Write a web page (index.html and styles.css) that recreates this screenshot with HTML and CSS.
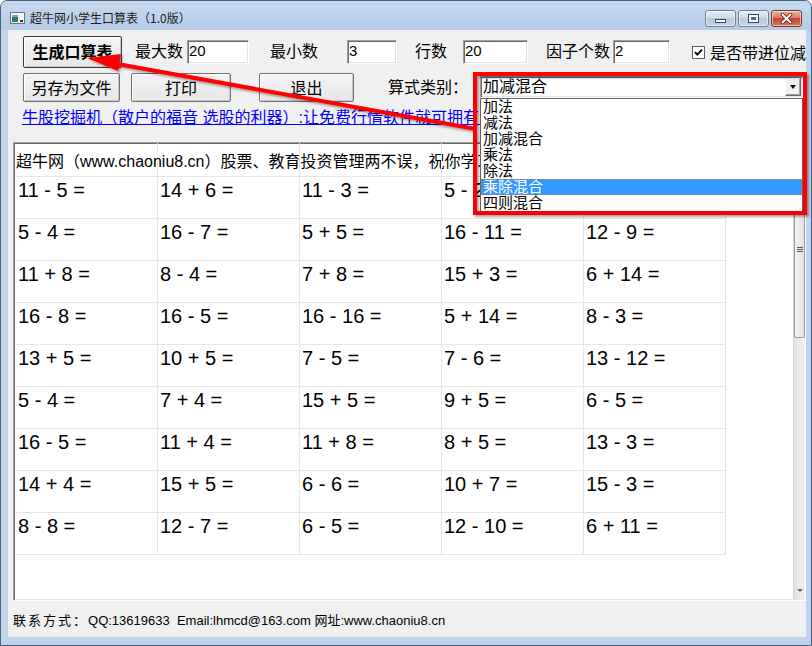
FILE: index.html
```html
<!doctype html>
<html lang="zh-CN">
<head>
    <meta charset="UTF-8">
    <meta name="viewport" content="width=device-width, initial-scale=1.0">
    <title>超牛网小学生口算表</title>
    <link rel="stylesheet" href="styles.css">
</head>
<body>
<div class="window">
    <div class="titlebar">
        <svg class="app-icon" width="16" height="16" viewBox="0 0 16 16">
            <rect x="0.5" y="2.5" width="14" height="11" fill="#f3f5f7" stroke="#6a7580"/>
            <rect x="2" y="5" width="6" height="7" fill="#2e7d68"/>
            <rect x="2" y="5" width="6" height="2" fill="#6fb39c"/>
            <rect x="10" y="10" width="3" height="2" fill="#333"/>
        </svg>
        <span class="title">超牛网小学生口算表（1.0版）</span>
        <div class="caption-buttons">
            <span class="cap cap-min"><i></i></span>
            <span class="cap cap-max"><i></i></span>
            <span class="cap cap-close">
                <svg width="13" height="11" viewBox="0 0 13 11">
                    <path d="M2.5 1.5 L10.5 9.5 M10.5 1.5 L2.5 9.5" stroke="#5a1a12" stroke-width="3.6" stroke-linecap="round"/>
                    <path d="M2.5 1.5 L10.5 9.5 M10.5 1.5 L2.5 9.5" stroke="#fff" stroke-width="2" stroke-linecap="round"/>
                </svg>
            </span>
        </div>
    </div>

    <div class="client">
        <div class="row row-top">
            <button class="btn btn-make">生成口算表</button>
            <span class="lbl lbl-max">最大数</span><input class="field f-max" type="text" value="20">
            <span class="lbl lbl-min">最小数</span><input class="field f-min" type="text" value="3">
            <span class="lbl lbl-rows">行数</span><input class="field f-rows" type="text" value="20">
            <span class="lbl lbl-factor">因子个数</span><input class="field f-factor" type="text" value="2">
            <label class="check">
                <span class="check-box">
                    <svg width="11" height="11" viewBox="0 0 11 11"><path d="M2 5.2 L4.3 7.6 L9 2.6" fill="none" stroke="#000" stroke-width="1.9"/></svg>
                </span>是否带进位减法
            </label>
        </div>

        <div class="row row-second">
            <button class="btn btn-save">另存为文件</button>
            <button class="btn btn-print">打印</button>
            <button class="btn btn-exit">退出</button>
            <span class="lbl lbl-type">算式类别：</span>
            <div class="combo">
                <span class="combo-text">加减混合</span>
                <span class="combo-btn"></span>
                <ul class="combo-list">
                    <li>加法</li>
                    <li>减法</li>
                    <li>加减混合</li>
                    <li>乘法</li>
                    <li>除法</li>
                    <li class="selected">乘除混合</li>
                    <li>四则混合</li>
                </ul>
            </div>
        </div>

        <div class="linkline">
            <a href="#">牛股挖掘机（散户的福音 选股的利器）:让免费行情软件就可拥有专业炒股软件的功能</a>
        </div>

        <div class="sheet">
            <div class="grid">
                <div class="cell head">超牛网（www.chaoniu8.cn）股票、教育投资管理两不误，祝你学习进步，投资成功！</div>
                <div class="cell head"></div>
                <div class="cell head"></div>
                <div class="cell head"></div>
                <div class="cell head"></div>

                <div class="cell">11 - 5 =</div><div class="cell">14 + 6 =</div><div class="cell">11 - 3 =</div><div class="cell">5 - 2 =</div><div class="cell">9 + 7 =</div>
                <div class="cell">5 - 4 =</div><div class="cell">16 - 7 =</div><div class="cell">5 + 5 =</div><div class="cell">16 - 11 =</div><div class="cell">12 - 9 =</div>
                <div class="cell">11 + 8 =</div><div class="cell">8 - 4 =</div><div class="cell">7 + 8 =</div><div class="cell">15 + 3 =</div><div class="cell">6 + 14 =</div>
                <div class="cell">16 - 8 =</div><div class="cell">16 - 5 =</div><div class="cell">16 - 16 =</div><div class="cell">5 + 14 =</div><div class="cell">8 - 3 =</div>
                <div class="cell">13 + 5 =</div><div class="cell">10 + 5 =</div><div class="cell">7 - 5 =</div><div class="cell">7 - 6 =</div><div class="cell">13 - 12 =</div>
                <div class="cell">5 - 4 =</div><div class="cell">7 + 4 =</div><div class="cell">15 + 5 =</div><div class="cell">9 + 5 =</div><div class="cell">6 - 5 =</div>
                <div class="cell">16 - 5 =</div><div class="cell">11 + 4 =</div><div class="cell">11 + 8 =</div><div class="cell">8 + 5 =</div><div class="cell">13 - 3 =</div>
                <div class="cell">14 + 4 =</div><div class="cell">15 + 5 =</div><div class="cell">6 - 6 =</div><div class="cell">10 + 7 =</div><div class="cell">15 - 3 =</div>
                <div class="cell">8 - 8 =</div><div class="cell">12 - 7 =</div><div class="cell">6 - 5 =</div><div class="cell">12 - 10 =</div><div class="cell">6 + 11 =</div>
            </div>
            <div class="vscroll">
                <div class="thumb"><span class="grip"></span></div>
                <div class="arrow-down"></div>
            </div>
        </div>

        <div class="status">
            <span class="status-cn">联系方式：</span>QQ:13619633&nbsp;&nbsp;Email:lhmcd@163.com 网址:www.chaoniu8.cn
        </div>
    </div>

    <!-- красная пометка поверх окна: рамка вокруг списка и стрелка к кнопке -->
    <svg class="mark" width="812" height="646" viewBox="0 0 812 646">
        <defs>
            <filter id="shade" x="-10%" y="-10%" width="120%" height="130%">
                <feDropShadow dx="2" dy="2" stdDeviation="1.2" flood-color="#000" flood-opacity="0.35"/>
            </filter>
        </defs>
        <g filter="url(#shade)">
            <rect x="475" y="74" width="330" height="139" fill="none" stroke="#ff0000" stroke-width="4"/>
            <line x1="112" y1="63" x2="476" y2="129" stroke="#ff0000" stroke-width="4"/>
            <polygon points="87,58 121,54 118,71" fill="#ff0000"/>
        </g>
    </svg>
</div>
</body>
</html>
```

FILE: styles.css
```css
* {
    box-sizing: border-box;
}
body {
    margin: 0;
    background: #fff;
    font-family: "Liberation Sans", "Noto Sans CJK SC", sans-serif;
}
.window {
    position: relative;
    width: 812px;
    height: 646px;
    border: 1px solid #4a5f78;
    border-radius: 7px 7px 0 0;
    background: #bfd4eb;
    display: flex;
    flex-direction: column;
    overflow: hidden;
}

/* заголовок окна */
.titlebar {
    height: 29px;
    flex: none;
    display: flex;
    align-items: flex-start;
    padding: 9px 9px 0 9px;
    background: linear-gradient(#c6daef, #b4cbe6);
}
.app-icon {
    flex: none;
}
.title {
    margin-left: 4px;
    font-size: 12px;
    line-height: 16px;
    color: #1a1a1a;
    font-family: "Noto Sans CJK SC", sans-serif;
}
.caption-buttons {
    margin-left: auto;
    display: flex;
    gap: 2px;
}
.cap {
    width: 31px;
    height: 17px;
    border: 1px solid #6b7f99;
    border-radius: 3px;
    background: linear-gradient(#e4edf7 0%, #cddbec 45%, #b5c9e0 50%, #c3d4e8 100%);
    box-shadow: inset 0 0 0 1px rgba(255, 255, 255, 0.55);
    display: flex;
    align-items: center;
    justify-content: center;
}
.cap-min i {
    display: block;
    width: 11px;
    height: 4px;
    margin-top: 5px;
    background: #fff;
    border: 1px solid #3a4a5e;
}
.cap-max i {
    display: block;
    width: 11px;
    height: 9px;
    border: 1px solid #3a4a5e;
    background: #56677d;
    box-shadow: inset 0 0 0 2px #fff;
}
.cap-close {
    border-color: #7c3026;
    background: linear-gradient(#eab0a2 0%, #d87d69 45%, #c4442f 50%, #d77a60 100%);
}

/* клиентская область */
.client {
    flex: 1;
    margin: 0 5px 8px 7px;
    background: #f0f0f0;
    display: flex;
    flex-direction: column;
    overflow: hidden;
    font-size: 16px;
    color: #000;
}
.row {
    display: flex;
    align-items: center;
    white-space: nowrap;
    padding-left: 15px;
    flex: none;
}
.row > * {
    flex: none;
}
.row-top {
    margin-top: 6px;
    height: 32px;
}
.row-second {
    margin-top: 5px;
    height: 29px;
}
.btn {
    height: 100%;
    padding: 0 0 2px 0;
    font-family: "Liberation Sans", "Noto Sans CJK SC", sans-serif;
    font-size: 16px;
    color: #000;
    border: 1px solid #707070;
    border-radius: 2px;
    background: linear-gradient(#f4f4f4, #e6e6e6);
    box-shadow: inset 1px 1px 0 #fff, inset -1px -1px 0 #c8c8c8;
}
.btn-make {
    width: 99px;
    font-weight: bold;
    border-color: #3c3c3c;
}
.btn-save {
    width: 97px;
}
.btn-print {
    width: 100px;
    margin-left: 11px;
}
.btn-exit {
    width: 95px;
    margin-left: 28px;
}
.lbl {
    display: inline-block;
    line-height: 20px;
}
.lbl-max {
    margin-left: 13px;
    width: 52px;
}
.lbl-min {
    margin-left: 21px;
    width: 77px;
}
.lbl-rows {
    margin-left: 18px;
    width: 48px;
}
.lbl-factor {
    margin-left: 18px;
    width: 67px;
}
.lbl-type {
    margin-left: 34px;
    width: 92px;
}
.field {
    height: 24px;
    padding: 0 0 3px 1px;
    font-family: "Liberation Sans", sans-serif;
    font-size: 15px;
    color: #000;
    background: #fff;
    border: 1px solid;
    border-color: #a0a0a0 #fff #fff #a0a0a0;
    box-shadow: inset 1px 1px 0 #696969, inset -1px -1px 0 #e3e3e3;
    outline: none;
}
.f-max { width: 62px; }
.f-min { width: 50px; }
.f-rows { width: 65px; }
.f-factor { width: 57px; }
.check {
    margin-left: 22px;
    display: flex;
    align-items: center;
}
.check-box {
    width: 13px;
    height: 13px;
    margin-right: 5px;
    border: 1px solid #5c5c5c;
    background: #fff;
    display: flex;
    align-items: center;
    justify-content: center;
}

/* выпадающий список типа выражений */
.combo {
    position: relative;
    align-self: flex-start;
    margin-top: 3px;
    width: 323px;
    height: 22px;
    display: flex;
    align-items: center;
    background: #fff;
    border: 1px solid;
    border-color: #a0a0a0 #fff #fff #a0a0a0;
    box-shadow: inset 1px 1px 0 #696969, inset -1px -1px 0 #e3e3e3;
}
.combo-text {
    flex: 1;
    padding-left: 2px;
    line-height: 18px;
}
.combo-btn {
    width: 16px;
    height: 18px;
    margin-right: 1px;
    background: #f0f0f0;
    border: 1px solid;
    border-color: #fff #696969 #696969 #fff;
    box-shadow: inset -1px -1px 0 #a0a0a0;
    display: flex;
    align-items: center;
    justify-content: center;
}
.combo-btn::after {
    content: "";
    border-left: 3.5px solid transparent;
    border-right: 3.5px solid transparent;
    border-top: 4px solid #000;
}
.combo-list {
    position: absolute;
    top: 21px;
    left: -1px;
    width: 323px;
    margin: 0;
    padding: 0;
    list-style: none;
    background: #fff;
    border: 1px solid #646464;
    z-index: 5;
}
.combo-list li {
    height: 16px;
    line-height: 16px;
    padding-left: 2px;
    font-size: 15px;
    overflow: hidden;
}
.combo-list li.selected {
    background: #3399ff;
    color: #fff;
    outline: 1px dotted #c27a3a;
    outline-offset: -1px;
}

.linkline {
    flex: none;
    height: 40px;
    padding: 7px 0 0 14px;
    line-height: 18px;
    white-space: nowrap;
    overflow: hidden;
}
.linkline a {
    color: #0000ff;
    text-decoration: underline;
}

/* таблица примеров */
.sheet {
    flex: none;
    height: 459px;
    margin-left: 5px;
    display: flex;
    padding-left: 2px;
    background: #fff;
    border: 1px solid;
    border-color: #a0a0a0 #fff #fff #a0a0a0;
    box-shadow: inset 1px 1px 0 #696969, inset -1px -1px 0 #e3e3e3;
}
.grid {
    flex: 1;
    display: grid;
    grid-template-columns: repeat(5, 142px);
    grid-template-rows: 34px repeat(9, 42px);
    align-content: start;
}
.cell {
    border-right: 1px solid #e6e6e6;
    border-bottom: 1px solid #e6e6e6;
    padding: 2px 0 0 2px;
    font-family: "Liberation Sans", sans-serif;
    font-size: 20px;
    line-height: 23px;
    white-space: nowrap;
}
.cell.head {
    padding: 10px 0 0 0;
    font-family: "Liberation Sans", "Noto Sans CJK SC", sans-serif;
    font-size: 16px;
    line-height: 18px;
}
.vscroll {
    width: 12px;
    flex: none;
    display: flex;
    flex-direction: column;
    background: linear-gradient(90deg, #e2e2e2, #f2f2f2);
    border-left: 1px solid #d6d6d6;
}
.thumb {
    margin-top: 70px;
    height: 125px;
    border: 1px solid #979797;
    border-radius: 2px;
    background: linear-gradient(90deg, #f3f3f3, #e2e2e2);
    display: flex;
    justify-content: center;
}
.grip {
    margin-top: 33px;
    width: 6px;
    height: 5px;
    background: repeating-linear-gradient(#555 0, #555 1px, transparent 1px, transparent 2px);
}
.arrow-down {
    margin-top: auto;
    margin-bottom: 8px;
    align-self: center;
    border-left: 3px solid transparent;
    border-right: 3px solid transparent;
    border-top: 3px solid #6a6a6a;
}

.status {
    flex: none;
    height: 36px;
    padding-left: 5px;
    display: flex;
    align-items: center;
    font-size: 13px;
    white-space: nowrap;
}
.status-cn {
    letter-spacing: 2px;
}

.mark {
    position: absolute;
    left: -1px;
    top: -1px;
    pointer-events: none;
    z-index: 10;
}
```
